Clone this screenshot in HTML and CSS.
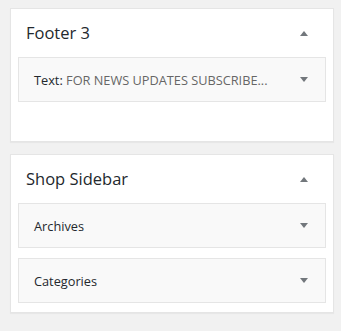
FILE: index.html
```html
<!DOCTYPE html>
<html lang="en">
<head>
  <meta charset="UTF-8" />
  <meta name="viewport" content="width=device-width, initial-scale=1.0"/>
  <title>Widgets</title>
  <link rel="stylesheet" href="styles.css">
</head>
<body>

  <div class="sidebar">
    <div class="sidebar-name">
      <h2>Footer 3</h2>
      <svg class="toggle" width="8" height="5" viewBox="0 0 8 5"><path d="M4 0 L8 5 L0 5 Z" /></svg>
    </div>
    <div class="widget-list first">
      <div class="widget">
        <span class="widget-title">Text:<span class="in-title"> FOR NEWS UPDATES SUBSCRIBE...</span></span>
        <svg class="toggle" width="8" height="5" viewBox="0 0 8 5"><path d="M0 0 L8 0 L4 5 Z" /></svg>
      </div>
    </div>
  </div>

  <div class="sidebar">
    <div class="sidebar-name">
      <h2>Shop Sidebar</h2>
      <svg class="toggle" width="8" height="5" viewBox="0 0 8 5"><path d="M4 0 L8 5 L0 5 Z" /></svg>
    </div>
    <div class="widget-list">
      <div class="widget">
        <span class="widget-title">Archives</span>
        <svg class="toggle" width="8" height="5" viewBox="0 0 8 5"><path d="M0 0 L8 0 L4 5 Z" /></svg>
      </div>
      <div class="widget">
        <span class="widget-title">Categories</span>
        <svg class="toggle" width="8" height="5" viewBox="0 0 8 5"><path d="M0 0 L8 0 L4 5 Z" /></svg>
      </div>
    </div>
  </div>

</body>
</html>
```

FILE: styles.css
```css
body {
  background-color: #f1f1f1;
  font-family: "Open Sans", sans-serif;
  color: #23282d;
  margin: 0;
  padding: 8px 7px 0 10px;
}

.sidebar {
  background-color: #fff;
  border: 1px solid #e5e5e5;
  box-shadow: 0 1px 1px rgba(0, 0, 0, 0.04);
  padding: 0 7px;
  margin-bottom: 12px;
}

.sidebar-name {
  display: flex;
  align-items: center;
  justify-content: space-between;
  height: 48px;
  padding: 0 18px 0 8px;
}

.sidebar-name h2 {
  margin: 0;
  font-size: 16.5px;
  font-weight: normal;
  position: relative;
  top: -1px;
}

.toggle path {
  fill: #72777c;
}

.widget-list {
  display: flex;
  flex-direction: column;
  gap: 10px;
  padding-bottom: 9px;
}

.widget-list.first {
  min-height: 75px;
}

.widget {
  display: flex;
  align-items: center;
  justify-content: space-between;
  height: 43px;
  background-color: #f9f9f9;
  border: 1px solid #e5e5e5;
  padding: 0 17px 0 15px;
}

.widget-title {
  font-size: 12.75px;
}

.in-title {
  color: #666;
}
```
